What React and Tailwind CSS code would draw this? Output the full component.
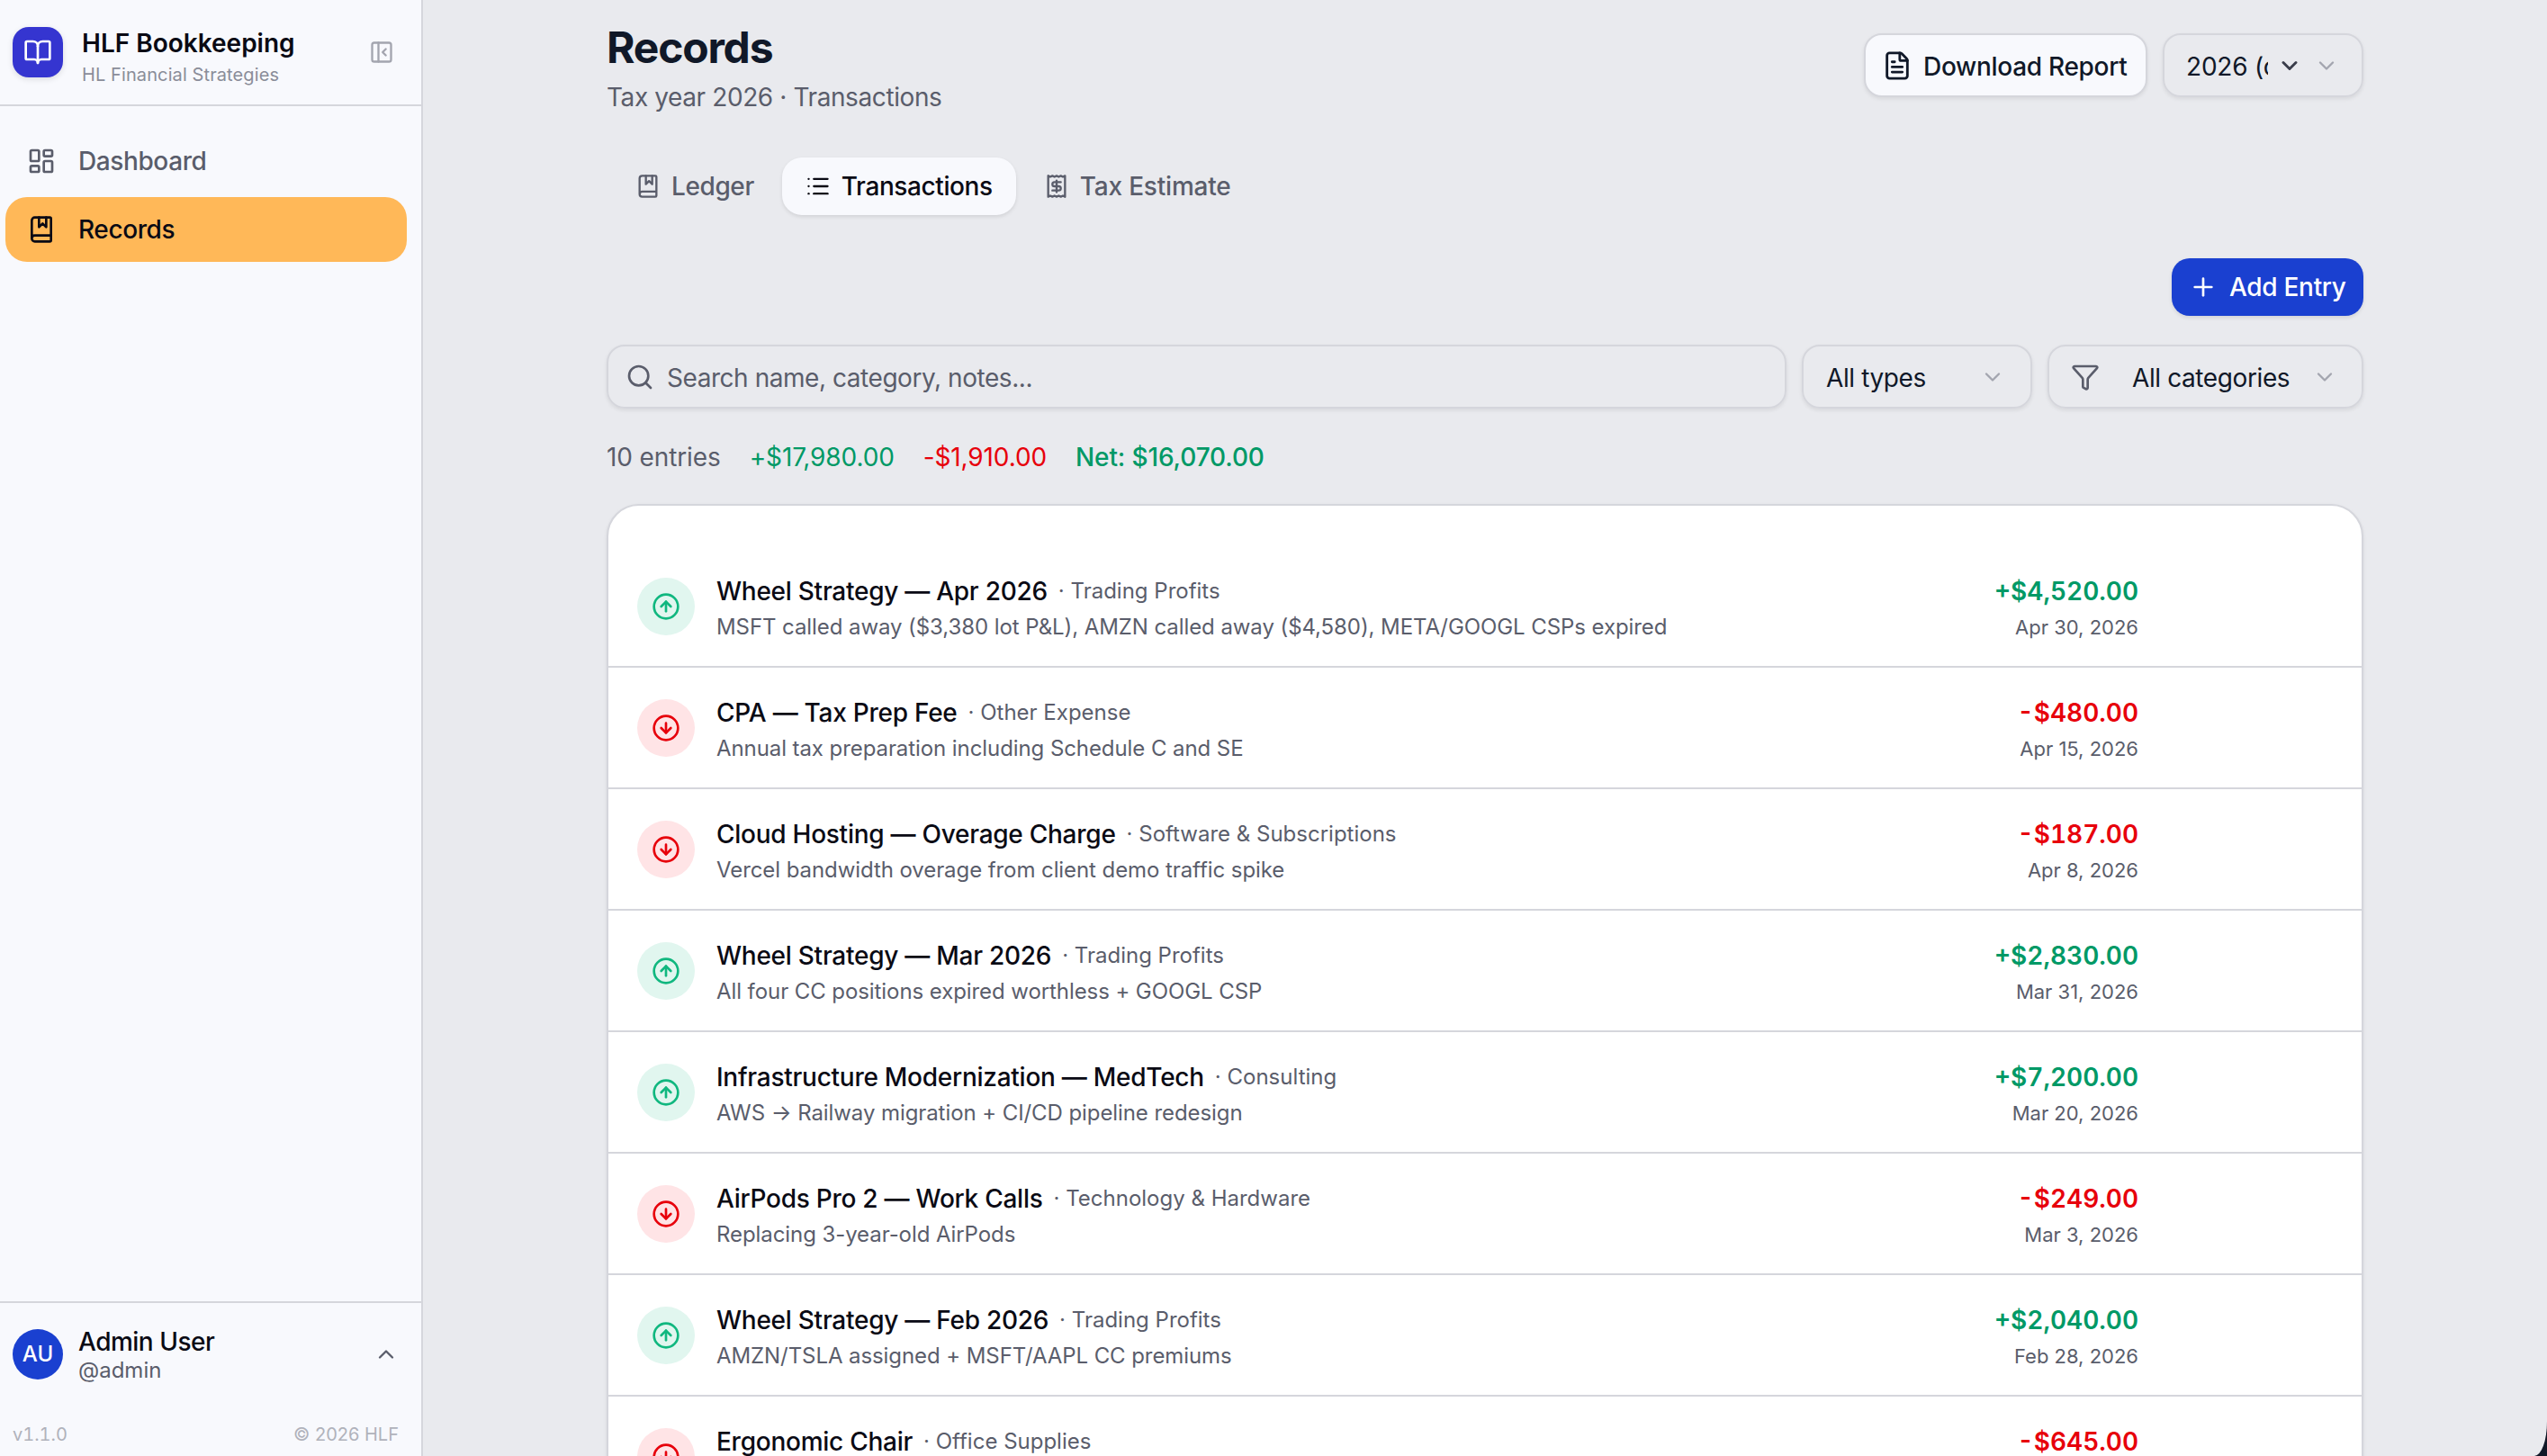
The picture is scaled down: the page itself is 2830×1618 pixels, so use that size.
import React from "react";
import {
  BookOpen,
  PanelLeftClose,
  LayoutDashboard,
  BookMarked,
  List,
  Receipt,
  FileText,
  ChevronDown,
  ChevronUp,
  Plus,
  Search,
  Funnel,
  CircleArrowUp,
  CircleArrowDown,
} from "lucide-react";

const entries = [
  { name: "Wheel Strategy — Apr 2026", cat: "Trading Profits", note: "MSFT called away ($3,380 lot P&L), AMZN called away ($4,580), META/GOOGL CSPs expired", amount: "+$4,520.00", date: "Apr 30, 2026", up: true },
  { name: "CPA — Tax Prep Fee", cat: "Other Expense", note: "Annual tax preparation including Schedule C and SE", amount: "-$480.00", date: "Apr 15, 2026", up: false },
  { name: "Cloud Hosting — Overage Charge", cat: "Software & Subscriptions", note: "Vercel bandwidth overage from client demo traffic spike", amount: "-$187.00", date: "Apr 8, 2026", up: false },
  { name: "Wheel Strategy — Mar 2026", cat: "Trading Profits", note: "All four CC positions expired worthless + GOOGL CSP", amount: "+$2,830.00", date: "Mar 31, 2026", up: true },
  { name: "Infrastructure Modernization — MedTech", cat: "Consulting", note: "AWS → Railway migration + CI/CD pipeline redesign", amount: "+$7,200.00", date: "Mar 20, 2026", up: true },
  { name: "AirPods Pro 2 — Work Calls", cat: "Technology & Hardware", note: "Replacing 3-year-old AirPods", amount: "-$249.00", date: "Mar 3, 2026", up: false },
  { name: "Wheel Strategy — Feb 2026", cat: "Trading Profits", note: "AMZN/TSLA assigned + MSFT/AAPL CC premiums", amount: "+$2,040.00", date: "Feb 28, 2026", up: true },
  // last row runs off the bottom of the page, its second line is never seen
  { name: "Ergonomic Chair", cat: "Office Supplies", note: "\u00a0", amount: "-$645.00", date: "\u00a0", up: false },
];

const Row = ({ entry }) => (
  <div className="flex items-center h-[135px] shrink-0 border-b-2 border-[#d5d6dc] pl-[32px] pr-[248px]">
    <div
      className={`w-[64px] h-[64px] rounded-full flex items-center justify-center shrink-0 ${
        entry.up ? "bg-[#e1f6ef] text-[#10b77f]" : "bg-[#ffe4e6] text-[#e7000b]"
      }`}
    >
      {entry.up ? (
        <CircleArrowUp className="w-[32px] h-[32px]" strokeWidth={2} />
      ) : (
        <CircleArrowDown className="w-[32px] h-[32px]" strokeWidth={2} />
      )}
    </div>
    <div className="ml-[24px] flex-1 min-w-0 pt-[5px]">
      <div className="flex items-center h-[40px]">
        <span className="text-[28px] leading-[40px] tracking-[-0.26px] font-medium text-[#0a0a14]">{entry.name}</span>
        <span className="ml-[12px] text-[24px] leading-[40px] text-[#5a5d6b]">· {entry.cat}</span>
      </div>
      <p className="text-[24px] leading-[36px] tracking-[-0.08px] mt-[2px] text-[#5a5d6b]">{entry.note}</p>
    </div>
    <div className="text-right shrink-0 pt-[5px]">
      <p className={`text-[28px] leading-[40px] font-semibold tabular-nums ${entry.up ? "text-[#009966]" : "text-[#e7000b]"}`}>
        {entry.amount}
      </p>
      <p className="text-[22px] leading-[36px] mt-[2px] text-[#5a5d6b]">{entry.date}</p>
    </div>
  </div>
);

export default function App() {
  return (
    <div className="flex h-screen w-screen overflow-hidden bg-[#111827] font-['Inter',sans-serif]">
      {/* Sidebar */}
      <aside className="w-[470px] shrink-0 flex flex-col bg-[#f8f9fd] border-r-2 border-[#d5d6dc]">
        <div className="flex items-center h-[118px] shrink-0 border-b-2 border-[#d5d6dc] pl-[14px] pr-[30px]">
          <div className="w-[56px] h-[56px] rounded-[18px] bg-[#3535d0] shadow-[0_2px_6px_rgba(0,0,0,0.12)] flex items-center justify-center shrink-0">
            <BookOpen className="w-[32px] h-[32px] text-white" strokeWidth={2} />
          </div>
          <div className="ml-[21px] flex-1 pt-[11px]">
            <p className="text-[28px] leading-[38px] font-semibold text-[#0a0a14]">HLF Bookkeeping</p>
            <p className="text-[20px] leading-[30px] mt-[1px] tracking-[0.1px] text-[#8a8d99]">HL Financial Strategies</p>
          </div>
          <PanelLeftClose className="w-[28px] h-[28px] text-[#a3a5af]" strokeWidth={2} />
        </div>

        <nav className="flex-1 pl-[6px] pr-[16px] pt-[25px]">
          <div className="flex items-center h-[72px] rounded-[24px] pl-[24px] text-[#5a5d6b]">
            <LayoutDashboard className="w-[32px] h-[32px]" strokeWidth={2} />
            <span className="ml-[25px] text-[28px] tracking-[-0.4px] font-medium">Dashboard</span>
          </div>
          <div className="mt-[4px] flex items-center h-[72px] rounded-[24px] pl-[24px] bg-[#ffb858] text-[#0a0a14]">
            <BookMarked className="w-[32px] h-[32px]" strokeWidth={2} />
            <span className="ml-[25px] text-[28px] tracking-[-0.4px] font-medium">Records</span>
          </div>
        </nav>

        <div className="border-t-2 border-[#d5d6dc] shrink-0 h-[172px] px-[14px]">
          <div className="flex items-center pt-[25px]">
            <div className="w-[56px] h-[56px] rounded-full bg-[#1a40d0] flex items-center justify-center text-white text-[24px] font-medium shrink-0">
              AU
            </div>
            <div className="ml-[17px] flex-1">
              <p className="text-[28px] leading-[36px] tracking-[-0.5px] font-medium text-[#0a0a14]">Admin User</p>
              <p className="text-[24px] leading-[28px] text-[#5a5d6b]">@admin</p>
            </div>
            <ChevronUp className="w-[28px] h-[28px] mr-[11px] text-[#5a5d6b]" strokeWidth={2} />
          </div>
          <div className="flex justify-between items-center mt-[42px] pr-[11px] text-[20px] text-[#b0b2bb]">
            <span className="tabular-nums">v1.1.0</span>
            <span>© 2026 HLF</span>
          </div>
        </div>
      </aside>

      {/* Main */}
      <main className="flex-1 min-w-0 overflow-hidden bg-[#e9eaee] rounded-br-[14px_38px]">
        <div className="w-[1952px] mx-auto pt-[18px]">
          <header className="flex justify-between items-start">
            <div>
              <h1 className="text-[48px] leading-[70px] font-bold tracking-tight text-[#101828]">Records</h1>
              <p className="text-[28px] leading-[40px] tracking-[-0.4px] text-[#5a5d6b]">Tax year 2026 · Transactions</p>
            </div>
            <div className="flex gap-[17px] mt-[19px]">
              <button className="flex items-center h-[71px] w-[315px] pl-[18px] rounded-[20px] border-2 border-[#d5d6dc] bg-[#f8f9fd] shadow-[0_2px_4px_rgba(0,0,0,0.08)] text-[#101828]">
                <FileText className="w-[34px] h-[34px]" strokeWidth={2} />
                <span className="ml-[12px] pt-[3px] text-[28px] tracking-[-0.3px] font-medium">Download Report</span>
              </button>
              <div className="flex items-center h-[71px] w-[223px] pl-[24px] rounded-[20px] border-2 border-[#d5d6dc] shadow-[0_2px_4px_rgba(0,0,0,0.08)] text-[#101828]">
                <span className="w-[91px] pt-[3px] overflow-hidden whitespace-nowrap text-[28px] tracking-[-0.2px]">2026 (current)</span>
                <ChevronDown className="ml-[10px] w-[28px] h-[28px] text-[#3a3d4a]" strokeWidth={2.5} />
                <ChevronDown className="ml-[13px] w-[28px] h-[28px] text-[#a3a5af]" strokeWidth={2} />
              </div>
            </div>
          </header>

          {/* Tabs */}
          <div className="flex items-center gap-[5px] mt-[47px] pl-[6px]">
            <div className="flex items-center h-[64px] px-[26px] text-[#5a5d6b]">
              <BookMarked className="w-[28px] h-[28px]" strokeWidth={2} />
              <span className="ml-[12px] text-[28px] tracking-[-0.4px] font-medium">Ledger</span>
            </div>
            <div className="flex items-center h-[64px] px-[26px] rounded-[22px] bg-[#f8f9fd] shadow-[0_2px_4px_rgba(0,0,0,0.1)] text-[#0a0a14]">
              <List className="w-[28px] h-[28px]" strokeWidth={2} />
              <span className="ml-[12px] text-[28px] tracking-[-0.4px] font-medium">Transactions</span>
            </div>
            <div className="flex items-center h-[64px] px-[26px] text-[#5a5d6b]">
              <Receipt className="w-[28px] h-[28px]" strokeWidth={2} />
              <span className="ml-[12px] text-[28px] tracking-[-0.2px] font-medium">Tax Estimate</span>
            </div>
          </div>

          <div className="flex justify-end mt-[48px]">
            <button className="flex items-center h-[64px] w-[213px] pl-[19px] rounded-[20px] bg-[#1a40d0] shadow-[0_2px_4px_rgba(0,0,0,0.1)] text-white">
              <Plus className="w-[32px] h-[32px]" strokeWidth={2} />
              <span className="ml-[13px] text-[28px] tracking-[-0.3px] font-medium">Add Entry</span>
            </button>
          </div>

          {/* Filters */}
          <div className="flex gap-[17px] mt-[32px]">
            <div className="flex-1 flex items-center h-[71px] pl-[19px] rounded-[20px] border-2 border-[#d5d6dc] shadow-[0_2px_4px_rgba(0,0,0,0.08)]">
              <Search className="w-[32px] h-[32px] text-[#5a5d6b]" strokeWidth={2} />
              <span className="ml-[14px] pt-[3px] text-[28px] tracking-[-0.45px] text-[#5a5d6b]">Search name, category, notes...</span>
            </div>
            <div className="flex items-center h-[71px] w-[256px] pl-[25px] rounded-[20px] border-2 border-[#d5d6dc] shadow-[0_2px_4px_rgba(0,0,0,0.08)] text-[#101828]">
              <span className="text-[28px] pt-[3px] tracking-[-0.4px] flex-1">All types</span>
              <ChevronDown className="mr-[28px] w-[28px] h-[28px] text-[#a3a5af]" strokeWidth={2} />
            </div>
            <div className="flex items-center h-[71px] w-[351px] pl-[24px] rounded-[20px] border-2 border-[#d5d6dc] shadow-[0_2px_4px_rgba(0,0,0,0.08)] text-[#101828]">
              <Funnel className="w-[32px] h-[32px] text-[#5a5d6b]" strokeWidth={2} />
              <span className="ml-[36px] pt-[3px] text-[28px] tracking-[-0.4px] flex-1">All categories</span>
              <ChevronDown className="mr-[27px] w-[28px] h-[28px] text-[#a3a5af]" strokeWidth={2} />
            </div>
          </div>

          {/* Summary */}
          <div className="flex items-center gap-[32px] mt-[34px] h-[40px] text-[28px] tracking-[-0.12px]">
            <span className="text-[#5a5d6b]">10 entries</span>
            <span className="text-[#009966]">+$17,980.00</span>
            <span className="text-[#e7000b]">-$1,910.00</span>
            <span className="text-[#009966] font-medium">Net: $16,070.00</span>
          </div>

          {/* List */}
          <div className="mt-[32px] bg-white border-2 border-[#d5d6dc] rounded-t-[36px] pt-[45px] shadow-[0_2px_4px_rgba(0,0,0,0.08)]">
            {entries.map((entry) => (
              <Row key={entry.name} entry={entry} />
            ))}
          </div>
        </div>
      </main>
    </div>
  );
}
